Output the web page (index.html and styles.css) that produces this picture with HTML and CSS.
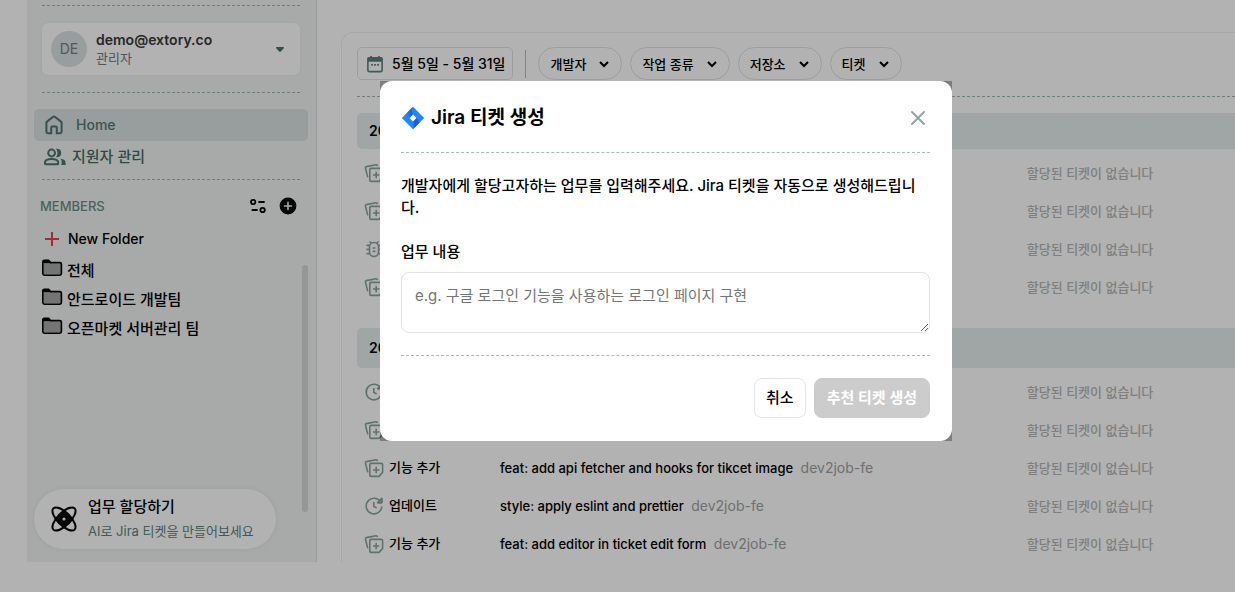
FILE: index.html
```
<!DOCTYPE html>
<html lang="ko">
<head>
    <meta charset="UTF-8">
    <meta name="viewport" content="width=device-width, initial-scale=1.0">
    <title>Jira 티켓 생성</title>
    <link rel="stylesheet" href="styles.css">
</head>
<body>
    <!-- Shared icons -->
    <svg class="sprite" aria-hidden="true">
        <symbol id="icon-feature" viewBox="0 0 20 20">
            <path d="M3.8 14.4 1.4 5Q1.2 3.8 2.4 3.6L12 1.8q1.2-.2 1.5 1.4M7 5.4h10.4q1.2 0 1.2 1.2v7.8L15 18.4H7q-1.2 0-1.2-1.2V6.6q0-1.2 1.2-1.2zM12.2 8.8v6.4M9 12h6.4"/>
        </symbol>
        <symbol id="icon-update" viewBox="0 0 20 20">
            <path d="M16.8 6.2A7.8 7.8 0 1 0 17.8 10.4M17.8 2.2v4.4h-4.4M9.8 6v4.4l2.8 1.6"/>
            <path d="M17.8 2.4v4.2h-4.2z" fill="#8aa39e"/>
        </symbol>
        <symbol id="icon-bug" viewBox="0 0 20 20">
            <path d="M5.5 8a4.5 4.5 0 0 1 9 0v5a4.5 4.5 0 0 1-9 0zM7.2 4.6 5.6 2.4M12.8 4.6l1.6-2.2M2.4 6.4h3.2M2.4 10.4h3.2M2.4 14.6h3.2M14.4 6.4h3.2M14.4 10.4h3.2M14.4 14.6h3.2M8.6 9h2.8M8.6 12.4h2.8"/>
        </symbol>
        <symbol id="icon-folder" viewBox="0 0 22 18">
            <path d="M2 4.4h18v11.2H2z" fill="#a6a6a6"/>
            <path d="M1.8 15V2.8Q1.8 1.4 3.2 1.4H7.6l2 2.2h9.2q1.6 0 1.6 1.6v9.4q0 1.6-1.6 1.6H3.4q-1.6 0-1.6-1.6z" fill="none" stroke="#000" stroke-width="1.6"/>
            <path d="M2 1.6h5.8l2 2.6H2z"/>
        </symbol>
        <symbol id="icon-chevron" viewBox="0 0 12 12">
            <path d="m2 4 4 4 4-4"/>
        </symbol>
    </svg>

    <div class="app">
        <aside class="sidebar">
            <hr class="divider">
            <button class="account" type="button">
                <span class="avatar">DE</span>
                <span class="account-text">
                    <strong>demo@extory.co</strong>
                    <span>관리자</span>
                </span>
                <svg class="caret" viewBox="0 0 8 5"><path d="M0 .6Q0 0 .8 0h6.4Q8 0 8 .6 8 1.2 7.4 1.8L4.8 4.6q-.8.7-1.6 0L.6 1.8Q0 1.2 0 .6z"/></svg>
            </button>
            <hr class="divider">

            <nav class="nav">
                <a class="nav-link active" href="#">
                    <svg class="nav-icon" viewBox="0 0 20 20"><path d="M2.4 7.8Q2.4 7 3 6.6L9.2 1.8q.8-.6 1.6 0L17 6.6q.6.4.6 1.2v9q0 1.4-1.4 1.4h-3.4v-5.6q0-1-1-1H8.2q-1 0-1 1v5.6H3.8q-1.4 0-1.4-1.4z"/></svg>
                    Home
                </a>
                <a class="nav-link applicants" href="#">
                    <svg class="nav-icon" viewBox="0 0 22 20"><circle cx="7.6" cy="6" r="3.4"/><path d="M1 16.6v-1Q1 12 7.6 12t6.6 3.6v1q0 .6-.6.6H1.6q-.6 0-.6-.6z"/><path class="solid" d="M12 1.8q5.2-.4 5.2 4.2t-5.2 4.2q3-4 0-8.4zM16.4 11.4q5.2 1 5.2 4.4v2.2h-4.4q1.4-4-.8-6.6z"/></svg>
                    지원자 관리
                </a>
            </nav>
            <hr class="divider">

            <div class="members-head">
                <h2>MEMBERS</h2>
                <button type="button" aria-label="필터">
                    <svg viewBox="0 0 18 18" fill="none" stroke="#000" stroke-width="1.8" stroke-linecap="round"><circle cx="4.2" cy="5" r="2.2"/><path d="M10 5h5M3.4 13H8"/><circle cx="13.6" cy="13" r="2.2"/></svg>
                </button>
                <button type="button" aria-label="추가">
                    <svg viewBox="0 0 18 18"><circle cx="9" cy="9" r="8.4"/><path d="M9 5.4v7.2M5.4 9h7.2" stroke="#f0f4f3" stroke-width="1.6" stroke-linecap="round"/></svg>
                </button>
            </div>

            <div class="folder-area">
                <div class="folder-column">
                    <button class="new-folder" type="button">
                        <svg viewBox="0 0 14 14"><path d="M7 0v14M0 7h14"/></svg>
                        New Folder
                    </button>
                    <ul class="folders">
                        <li><a href="#"><svg><use href="#icon-folder"/></svg><span>전체</span></a></li>
                        <li><a href="#"><svg><use href="#icon-folder"/></svg><span>안드로이드 개발팀</span></a></li>
                        <li><a href="#"><svg><use href="#icon-folder"/></svg><span>오픈마켓 서버관리 팀</span></a></li>
                    </ul>
                    <button class="assign" type="button">
                        <svg viewBox="0 0 28 28">
                            <g fill="none" stroke="#000" stroke-width="2">
                                <ellipse cx="14" cy="14" rx="15" ry="6.4" transform="rotate(45 14 14)"/>
                                <ellipse cx="14" cy="14" rx="15" ry="6.4" transform="rotate(-45 14 14)"/>
                            </g>
                            <path d="m14 5.4 8.6 8.6-8.6 8.6L5.4 14z"/>
                            <circle cx="14" cy="14" r="1.6" fill="#fff"/>
                        </svg>
                        <span class="assign-text">
                            <strong>업무 할당하기</strong>
                            <span>AI로 Jira 티켓을 만들어보세요</span>
                        </span>
                    </button>
                </div>
                <div class="scroll-thumb"></div>
            </div>
        </aside>

        <main class="panel">
            <div class="filters">
                <button class="date-range" type="button">
                    <svg viewBox="0 0 18 20"><path d="M2 3h14q1 0 1 1v13q0 1.6-1.6 1.6H2.6Q1 18.6 1 17V4q0-1 1-1z" fill="none" stroke="#5b827a" stroke-width="1.8"/><path d="M1 3h16v4.4H1zM3.6 1h2v3h-2zM12.4 1h2v3h-2zM4.6 10h2v2h-2zM8 10h2v2H8zM11.4 10h2v2h-2z" fill="#5b827a"/></svg>
                    5월 5일 - 5월 31일
                </button>
                <span class="separator"></span>
                <button class="chip" type="button">개발자 <svg><use href="#icon-chevron"/></svg></button>
                <button class="chip" type="button">작업 종류 <svg><use href="#icon-chevron"/></svg></button>
                <button class="chip" type="button">저장소 <svg><use href="#icon-chevron"/></svg></button>
                <button class="chip" type="button">티켓 <svg><use href="#icon-chevron"/></svg></button>
            </div>
            <hr class="divider">

            <h3 class="day">20</h3>
            <table class="tasks">
                <tr><td class="type"><svg><use href="#icon-feature"/></svg></td><td class="title"></td><td class="ticket">할당된 티켓이 없습니다</td></tr>
                <tr><td class="type"><svg><use href="#icon-feature"/></svg></td><td class="title"></td><td class="ticket">할당된 티켓이 없습니다</td></tr>
                <tr><td class="type"><svg><use href="#icon-bug"/></svg></td><td class="title"></td><td class="ticket">할당된 티켓이 없습니다</td></tr>
                <tr><td class="type"><svg><use href="#icon-feature"/></svg></td><td class="title"></td><td class="ticket">할당된 티켓이 없습니다</td></tr>
            </table>

            <h3 class="day">20</h3>
            <table class="tasks">
                <tr><td class="type"><svg><use href="#icon-update"/></svg></td><td class="title"></td><td class="ticket">할당된 티켓이 없습니다</td></tr>
                <tr><td class="type"><svg><use href="#icon-feature"/></svg></td><td class="title"></td><td class="ticket">할당된 티켓이 없습니다</td></tr>
                <tr><td class="type"><svg><use href="#icon-feature"/></svg>기능 추가</td><td class="title">feat: add api fetcher and hooks for tikcet image <span>dev2job-fe</span></td><td class="ticket">할당된 티켓이 없습니다</td></tr>
                <tr><td class="type"><svg><use href="#icon-update"/></svg>업데이트</td><td class="title">style: apply eslint and prettier <span>dev2job-fe</span></td><td class="ticket">할당된 티켓이 없습니다</td></tr>
                <tr><td class="type"><svg><use href="#icon-feature"/></svg>기능 추가</td><td class="title">feat: add editor in ticket edit form <span>dev2job-fe</span></td><td class="ticket">할당된 티켓이 없습니다</td></tr>
            </table>
        </main>
    </div>

    <!-- Create ticket dialog -->
    <div class="overlay">
        <div class="dialog-frame">
            <form class="dialog" role="dialog" aria-labelledby="dialogTitle">
                <header class="dialog-head">
                    <svg class="jira" viewBox="0 0 24 24">
                        <defs>
                            <linearGradient id="jiraShade" x1="0" x2="1"><stop offset="0" stop-color="#2684ff"/><stop offset="1" stop-color="#0f5ad8"/></linearGradient>
                        </defs>
                        <path d="M12 .8 23.2 12 12 23.2.8 12z" fill="#2684ff"/>
                        <path d="M12 .8Q9.6 5 12 8.6L8.6 12 5.4 7.4z" fill="url(#jiraShade)"/>
                        <path d="M12 23.2q2.4-4.2 0-7.8l3.4-3.4 3.2 4.6z" fill="#1560dc"/>
                        <path d="m12 8.6 3.4 3.4-3.4 3.4L8.6 12z" fill="#fff"/>
                    </svg>
                    <h1 id="dialogTitle">Jira 티켓 생성</h1>
                    <button class="close" type="button" aria-label="닫기">
                        <svg viewBox="0 0 14 14"><path d="m1 1 12 12M13 1 1 13"/></svg>
                    </button>
                </header>
                <div class="dialog-body">
                    <p>개발자에게 할당고자하는 업무를 입력해주세요. Jira 티켓을 자동으로 생성해드립니다.</p>
                    <label for="taskContent">업무 내용</label>
                    <textarea id="taskContent" placeholder="e.g. 구글 로그인 기능을 사용하는 로그인 페이지 구현"></textarea>
                </div>
                <footer class="dialog-foot">
                    <button class="btn" type="button">취소</button>
                    <button class="btn btn-submit" type="submit" disabled>추천 티켓 생성</button>
                </footer>
            </form>
        </div>
    </div>
</body>
</html>
```
FILE: styles.css
```
* { margin: 0; padding: 0; box-sizing: border-box; }
body {
    font-family: Inter, 'Noto Sans CJK KR', sans-serif;
    font-size: 13px;
    line-height: 18px;
    color: #000;
    background-color: #fff;
    overflow: hidden;
}
button, textarea {
    font: inherit;
    color: inherit;
    background: none;
    border: none;
}
button { cursor: pointer; }
a { color: inherit; text-decoration: none; }
ul { list-style: none; }
svg { display: block; flex: none; }
.sprite { position: absolute; width: 0; height: 0; }
.divider {
    border: none;
    border-top: 1px dashed #a3b5b1;
}

.app {
    display: flex;
    align-items: stretch;
    height: calc(100vh - 30px);
}

/* Sidebar */
.sidebar {
    flex: none;
    width: 290px;
    margin-left: 27px;
    padding: 5px 8px 13px 7px;
    display: flex;
    flex-direction: column;
    background-color: #f0f4f3;
    border-right: 1px solid #d6dddd;
}
.sidebar .divider { margin: 0 8px; }
.account {
    display: flex;
    align-items: center;
    gap: 9px;
    margin: 17px 8px;
    padding: 8px 16px 8px 9px;
    text-align: left;
    background-color: #fff;
    border-radius: 6px;
    box-shadow: 0 0 3px rgba(0, 0, 0, 0.06);
}
.avatar {
    width: 36px;
    height: 36px;
    line-height: 36px;
    text-align: center;
    font-size: 14px;
    color: #77807f;
    background-color: #dae1e3;
    border-radius: 50%;
}
.account-text { flex: 1; }
.account-text strong {
    display: block;
    font-size: 14px;
    font-weight: 600;
    color: #383838;
}
.account-text span { font-size: 13px; color: #777; }
.caret { width: 8px; height: 5px; fill: #3f776a; }

.nav { padding: 16px 0 6px; }
.nav-link {
    display: flex;
    align-items: center;
    gap: 12px;
    height: 32px;
    padding-left: 10px;
    font-size: 14px;
    font-weight: 500;
    color: #527b72;
    border-radius: 5px;
}
.nav-link.active { background-color: #dae1e3; }
.nav-icon {
    width: 20px;
    height: 20px;
    fill: none;
    stroke: #4f746d;
    stroke-width: 2;
}
.nav-icon .solid { fill: #4f746d; stroke: none; }
.applicants { gap: 6px; font-size: 15px; color: #456b61; }
.applicants .nav-icon { width: 22px; }

.members-head {
    display: flex;
    align-items: center;
    gap: 12px;
    padding: 17px 11px 0 6px;
}
.members-head h2 {
    flex: 1;
    font-size: 13px;
    font-weight: 500;
    color: #6b8d86;
}
.members-head svg { width: 18px; height: 18px; }

.folder-area { flex: 1; display: flex; }
.folder-column { flex: 1; display: flex; flex-direction: column; align-items: flex-start; }
.scroll-thumb {
    width: 6px;
    margin: 50px 0 37px;
    background-color: #d5d8d7;
    border-radius: 3px;
}
.new-folder {
    display: flex;
    align-items: center;
    gap: 9px;
    padding: 15px 11px 11px;
    font-size: 14px;
    font-weight: 500;
}
.new-folder svg { width: 14px; height: 14px; stroke: #ee3b4c; stroke-width: 2; }
.folders { padding-left: 7px; }
.folders a {
    display: flex;
    align-items: flex-start;
    gap: 4px;
    height: 29px;
    font-size: 15px;
    font-weight: 500;
}
.folders svg { width: 22px; height: 18px; }
.folders span { line-height: 24px; }
.assign {
    display: flex;
    align-items: center;
    gap: 10px;
    margin-top: auto;
    padding: 6px 22px 6px 16px;
    text-align: left;
    background-color: #fff;
    border-radius: 30px;
    box-shadow: 0 0 5px rgba(0, 0, 0, 0.08);
}
.assign svg { width: 28px; height: 28px; }
.assign-text strong {
    display: block;
    font-size: 15px;
    line-height: 24px;
    font-weight: 500;
}
.assign-text span {
    display: block;
    font-size: 13px;
    line-height: 24px;
    color: #5f8279;
}

/* Work list */
.panel {
    flex: 1;
    min-width: 0;
    margin: 32px 0 0 24px;
    padding: 14px 0 0 15px;
    overflow: hidden;
    border: 1px solid #f0f0f0;
    border-width: 1px 0 0 1px;
    border-top-left-radius: 12px;
}
.filters {
    display: flex;
    align-items: center;
    gap: 8px;
    margin-bottom: 16px;
}
.filters button {
    display: flex;
    align-items: center;
    height: 33px;
    font-size: 13px;
    font-weight: 500;
    white-space: nowrap;
    border: 1px solid #dfe3e2;
}
.filters .date-range {
    gap: 9px;
    padding: 0 7px 0 9px;
    font-size: 14px;
    border-radius: 5px;
}
.date-range svg { width: 16px; height: 18px; }
.separator { width: 1px; height: 28px; margin: 0 4px; background-color: #b3c2be; }
.filters .chip {
    gap: 12px;
    padding: 0 11px;
    border-radius: 17px;
}
.chip svg {
    width: 12px;
    height: 12px;
    fill: none;
    stroke: #000;
    stroke-width: 2;
}
.day {
    height: 36px;
    margin: 16px 0 5px;
    padding-left: 12px;
    line-height: 36px;
    font-size: 14px;
    font-weight: 600;
    background-color: #e6edee;
    border-radius: 5px 0 0 5px;
}
.tasks + .day { height: 40px; margin: 22px 0 5px; line-height: 40px; }
.tasks {
    width: 100%;
    table-layout: fixed;
    border-collapse: collapse;
    font-weight: 500;
}
.tasks td {
    height: 38px;
    vertical-align: middle;
    white-space: nowrap;
}
.tasks .type { width: 143px; padding-left: 7px; }
.type svg {
    display: inline-block;
    width: 20px;
    height: 20px;
    margin-right: 5px;
    vertical-align: middle;
    fill: none;
    stroke: #8aa39e;
    stroke-width: 1.6;
    stroke-linejoin: round;
}
.tasks .title { width: 60%; }
.title span { margin-left: 4px; font-size: 14px; font-weight: 400; color: #a0a0a0; }
.tasks .ticket { font-weight: 500; color: #b6b6b6; }

/* Dialog */
.overlay {
    position: fixed;
    inset: 0;
    display: flex;
    align-items: flex-start;
    padding: 81px 0 0 380px;
    background-color: rgba(0, 0, 0, 0.3);
}
.dialog-frame {
    width: 100%;
    max-width: 572px;
    background-color: rgba(0, 0, 0, 0.3);
}
.dialog {
    padding: 21px 22px 23px 21px;
    background-color: #fff;
    border-radius: 12px;
}
.dialog-head {
    display: flex;
    align-items: center;
    gap: 6px;
    padding-bottom: 18px;
    border-bottom: 1px dashed #a9bab6;
}
.jira { width: 24px; height: 24px; }
.dialog-head h1 {
    flex: 1;
    font-size: 19px;
    line-height: 32px;
    font-weight: 600;
}
.close { padding: 5px; }
.close svg { width: 14px; height: 14px; stroke: #8ba8a2; stroke-width: 2; stroke-linecap: round; }
.dialog-body {
    padding: 22px 0;
    font-size: 15px;
    line-height: 22px;
    font-weight: 500;
    border-bottom: 1px dashed #a9bab6;
}
.dialog-body p { word-break: break-all; }
.dialog-body label { display: block; margin: 22px 0 9px; }
.dialog-body textarea {
    display: block;
    width: 100%;
    height: 61px;
    padding: 12px 13px;
    font-weight: 400;
    border: 1px solid #dfe3e2;
    border-radius: 8px;
}
.dialog-body textarea::placeholder { color: #757575; }
.dialog-foot {
    display: flex;
    justify-content: flex-end;
    gap: 8px;
    padding-top: 22px;
}
.btn {
    height: 40px;
    padding: 0 11px;
    font-size: 15px;
    font-weight: 500;
    border: 1px solid #e2e5e5;
    border-radius: 8px;
}
.btn-submit {
    padding: 0 12px;
    font-weight: 600;
    color: #fff;
    background-color: #ccc;
    border-color: #ccc;
}
```
